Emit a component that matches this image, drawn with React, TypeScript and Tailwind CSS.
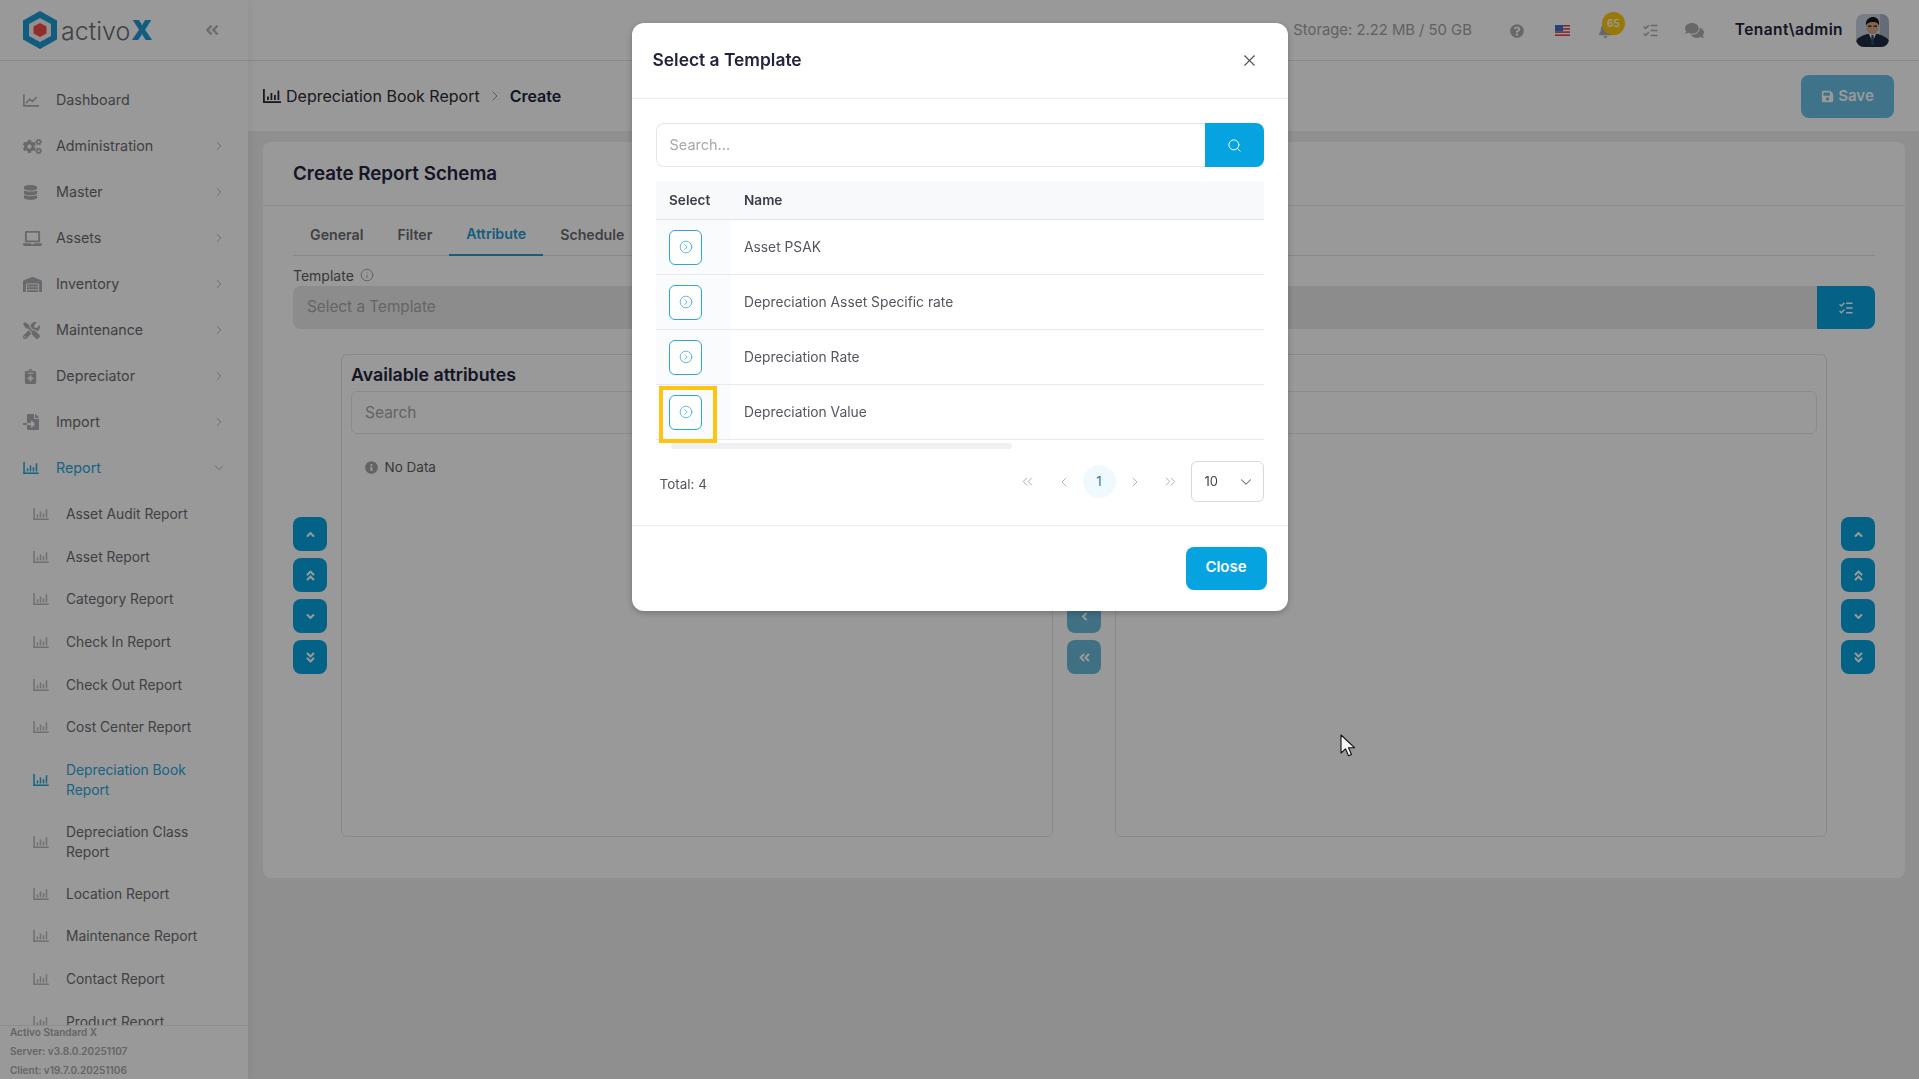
import React from "react";
import { ChevronRight, ChevronDown, ChevronLeft, ChevronsLeft, ChevronsRight, Info, Search, X, CircleChevronRight, ListChecks } from "lucide-react";
import { FaCogs, FaDatabase, FaLaptop, FaWarehouse, FaTools, FaNotesMedical, FaFileImport, FaQuestionCircle, FaBell, FaComments, FaSave, FaInfoCircle, FaAngleUp, FaAngleDoubleUp, FaAngleDown, FaAngleDoubleDown, FaAngleLeft, FaAngleDoubleLeft, FaAngleRight, FaAngleDoubleRight } from "react-icons/fa";

const BarIcon = ({ className = "" }: { className?: string }) => (
  <svg viewBox="0 0 18 14" className={className} fill="currentColor">
    <rect x="0" y="0" width="1.8" height="14" />
    <rect x="0" y="12.2" width="18" height="1.8" />
    <rect x="4" y="7.5" width="1.8" height="3.5" />
    <rect x="7.5" y="4" width="1.8" height="7" />
    <rect x="11" y="6" width="1.8" height="5" />
    <rect x="14.5" y="1.5" width="1.8" height="9.5" />
  </svg>
);

const LineIcon = ({ className = "" }: { className?: string }) => (
  <svg viewBox="0 0 18 14" className={className} fill="none" stroke="currentColor" strokeWidth="1.8">
    <path d="M1 0v13h17" />
    <path d="M3.5 10l4-4.5 3 2.5 5-5" />
  </svg>
);

const Logo = () => (
  <svg viewBox="0 0 34 38" className="w-[34px] h-[38px]">
    <polygon points="17,0 34,9.5 34,28.5 17,38 0,28.5 0,9.5" fill="#1f9ad6" />
    <polygon points="17,7 28,13 28,25 17,31 6,25 6,13" fill="#f2f2f2" />
    <polygon points="17,12 23.5,15.5 23.5,22.5 17,26 10.5,22.5 10.5,15.5" fill="#f04b4b" />
  </svg>
);

const Flag = () => (
  <svg viewBox="0 0 15 11" className="w-[15px] h-[11px]">
    <rect width="15" height="11" fill="#fff" />
    <rect y="0" width="15" height="1.6" fill="#e0434b" />
    <rect y="3.1" width="15" height="1.6" fill="#e0434b" />
    <rect y="6.3" width="15" height="1.6" fill="#e0434b" />
    <rect y="9.4" width="15" height="1.6" fill="#e0434b" />
    <rect width="8" height="6.3" fill="#3b6fd6" />
  </svg>
);

const Avatar = () => (
  <div className="w-[33px] h-[33px] rounded-lg overflow-hidden shrink-0">
    <svg viewBox="0 0 33 33" className="w-full h-full">
      <rect width="33" height="33" fill="#c9d2de" />
      <rect x="24" width="9" height="33" fill="#a9b4c6" />
      <path d="M0 33v-6c2-4 8-6 11-7h11c3 1 9 3 11 7v6z" fill="#1e2c44" />
      <path d="M13 20l3.5 8 3.5-8z" fill="#e8eef4" />
      <path d="M15.5 21h2l.6 10h-3.2z" fill="#27486e" />
      <ellipse cx="16.5" cy="13" rx="6" ry="7.5" fill="#d9a888" />
      <path d="M10 12c-1-7 4-9 7-9s7 2 6 9c-1-3-2-4-6-4s-6 1-7 4z" fill="#17140f" />
      <rect x="12" y="11.5" width="3.5" height="1.4" fill="#2a2a2a" />
      <rect x="17.5" y="11.5" width="3.5" height="1.4" fill="#2a2a2a" />
    </svg>
  </div>
);

const topItems: { label: string; icon: React.ReactNode; chev?: boolean }[] = [
  { label: "Dashboard", icon: <LineIcon className="w-[16px] h-[13px]" /> },
  { label: "Administration", icon: <FaCogs size={19} />, chev: true },
  { label: "Master", icon: <FaDatabase size={15} />, chev: true },
  { label: "Assets", icon: <FaLaptop size={19} />, chev: true },
  { label: "Inventory", icon: <FaWarehouse size={19} />, chev: true },
  { label: "Maintenance", icon: <FaTools size={17} />, chev: true },
  { label: "Depreciator", icon: <FaNotesMedical size={15} />, chev: true },
  { label: "Import", icon: <FaFileImport size={16} />, chev: true },
];

const subItems: { label: React.ReactNode; active?: boolean; tall?: boolean }[] = [
  { label: "Asset Audit Report" },
  { label: "Asset Report" },
  { label: "Category Report" },
  { label: "Check In Report" },
  { label: "Check Out Report" },
  { label: "Cost Center Report" },
  { label: "Depreciation Book Report", active: true, tall: true },
  { label: "Depreciation Class Report", tall: true },
  { label: "Location Report" },
  { label: "Maintenance Report" },
  { label: "Contact Report" },
  { label: "Product Report" },
];

const Sidebar = () => (
  <aside className="w-[248px] shrink-0 h-full bg-white flex flex-col relative shadow-[2px_0_10px_rgba(0,0,0,0.05)]">
    <div className="h-[61px] shrink-0 border-b border-[#e6e6e8] flex items-center pl-[23px] pr-[28px]">
      <Logo />
      <div className="ml-[4px] flex items-baseline leading-none">
        <span className="font-light text-[25px] text-[#6d6d72]">activo</span>
        <span className="font-black text-[#1f9ad6] text-[27px] ml-[1px]">X</span>
      </div>
      <FaAngleDoubleLeft className="ml-auto text-[#b8b8bc]" size={16} />
    </div>
    <nav className="flex-1 overflow-hidden pt-[16px] text-[13.8px] text-[#6c6c72]">
      {topItems.map((it) => (
        <div key={it.label} className="h-[46px] flex items-center pl-[23px] pr-[22px]">
          <span className="w-[33px] text-[#b0b0b6] flex items-center">{it.icon}</span>
          <span className="flex-1 text-[14.3px]">{it.label}</span>
          {it.chev && <ChevronRight size={14} strokeWidth={1.5} className="text-[#a8a8ac]" />}
        </div>
      ))}
      <div className="h-[46px] flex items-center pl-[23px] pr-[22px] text-[#2aa5da]">
        <span className="w-[33px] flex items-center"><BarIcon className="w-[16px] h-[12px]" /></span>
        <span className="flex-1 text-[14.3px]">Report</span>
        <ChevronDown size={14} strokeWidth={1.5} className="text-[#a8a8ac]" />
      </div>
      <div className="pt-[2px]">
        {subItems.map((s, i) => (
          <div key={i} className={`flex items-center pl-[33px] pr-[30px] leading-[20px] ${s.tall ? "h-[62px]" : "h-[42.6px]"} ${s.active ? "text-[#2aa5da]" : ""}`}>
            <span className={`w-[33px] shrink-0 ${s.active ? "" : "text-[#bcbcc0]"}`}><BarIcon className="w-[16px] h-[12px]" /></span>
            <span>{s.label}</span>
          </div>
        ))}
      </div>
    </nav>
    <div className="h-[54px] shrink-0 bg-white border-t border-[#ececee] pl-[10px] text-[10px] leading-[19px] font-semibold text-[#a8a8ac] whitespace-nowrap">
      <div className="-mt-[3px]">Activo Standard X</div>
      <div>Server: v3.8.0.20251107</div>
      <div>Client: v19.7.0.20251106</div>
    </div>
  </aside>
);

const Header = () => (
  <header className="h-[61px] shrink-0 bg-white border-b border-[#e6e6e8] flex items-center justify-end pr-[30px]">
    <span className="text-[14.8px] text-[#a2a2a6] mr-[38px]">Storage: 2.22 MB / 50 GB</span>
    <FaQuestionCircle size={14} className="text-[#adadb2] mr-[31px] mt-[2px]" />
    <span className="mr-[28px] flex"><Flag /></span>
    <span className="relative mr-[29px] flex">
      <FaBell size={15} className="text-[#adadb2]" />
      <span className="absolute left-[4px] -top-[11px] w-[23px] h-[23px] rounded-full bg-[#fdc80f] text-white text-[10px] font-semibold flex items-center justify-center">65</span>
    </span>
    <ListChecks size={17} className="text-[#adadb2] mr-[26px]" />
    <FaComments size={19} className="text-[#adadb2] mr-[31px]" />
    <span className="text-[15.5px] font-semibold text-[#23233c] mr-[13px] tracking-[0.4px]">Tenant\admin</span>
    <Avatar />
  </header>
);

const ArrowBtn = ({ children, faded }: { children: React.ReactNode; faded?: boolean }) => (
  <button className={`w-[34px] h-[34px] rounded-lg text-white flex items-center justify-center ${faded ? "bg-[#6cbbdb]" : "bg-[#05a4e0]"}`}>
    {children}
  </button>
);

const ArrowCol = () => (
  <div className="w-[34px] shrink-0 flex flex-col justify-center gap-[7px]">
    <ArrowBtn><FaAngleUp size={13} /></ArrowBtn>
    <ArrowBtn><FaAngleDoubleUp size={13} /></ArrowBtn>
    <ArrowBtn><FaAngleDown size={13} /></ArrowBtn>
    <ArrowBtn><FaAngleDoubleDown size={13} /></ArrowBtn>
  </div>
);

const AttrPanel = ({ title, empty }: { title: string; empty?: boolean }) => (
  <div className="flex-1 border border-[#e4e4e6] rounded-md px-[9px] pt-[10px]">
    <div className="text-[17.8px] font-semibold text-[#23233c] leading-[20px]">{title}</div>
    <div className="mt-[6px] h-[43px] border border-[#e8e8ea] rounded-md flex items-center px-[13px] text-[15.5px] text-[#a6a6aa]">Search</div>
    {empty && (
      <div className="mt-[23px] pl-[14px] flex items-center text-[13.5px] text-[#5d5d64]">
        <FaInfoCircle size={13} className="text-[#a5a5ac] mr-[6.5px]" />
        No Data
      </div>
    )}
  </div>
);

const Tab = ({ label, active }: { label: string; active?: boolean }) => (
  <div className={`h-[43px] px-[17px] flex items-center text-[14.2px] font-semibold ${active ? "text-[#1d9dd2] border-b-2 border-[#1d9dd2]" : "text-[#6c6c72]"}`}>{label}</div>
);

const Main = () => (
  <div className="flex-1 min-w-0 h-full flex flex-col bg-[#eeeeef]">
    <Header />
    <div className="h-[70px] shrink-0 bg-white flex items-center pl-[15px] pr-[25px]">
      <BarIcon className="w-[18px] h-[14px] text-[#2b2b33] mr-[5px]" />
      <span className="text-[16px] text-[#2b2b33]">Depreciation Book Report</span>
      <ChevronRight size={16} className="text-[#9a9a9e] mx-[7px]" strokeWidth={1.5} />
      <span className="text-[16px] font-semibold text-[#23233c]">Create</span>
      <button className="ml-auto w-[93px] h-[43px] rounded-lg bg-[#69c0e6] text-white text-[15px] font-semibold flex items-center justify-center gap-[4px]">
        <FaSave size={13} /> Save
      </button>
    </div>
    <div className="flex-1 min-h-0 pt-[11px] pl-[15px] pr-[14px]">
      <div className="w-full h-[736px] bg-white rounded-lg flex flex-col">
        <div className="h-[64px] shrink-0 border-b border-[#e8e8ea] flex items-center px-[30px] pt-[2px] text-[18.8px] font-semibold text-[#23233c]">Create Report Schema</div>
        <div className="px-[30px] flex-1 flex flex-col pb-[41px] min-h-0">
          <div className="h-[50px] shrink-0 pt-[7px] flex border-b border-[#e2e2e4]">
            <Tab label="General" />
            <Tab label="Filter" />
            <Tab label="Attribute" active />
            <Tab label="Schedule" />
          </div>
          <div className="mt-[9px] h-[20px] flex items-center text-[14px] text-[#5c5c62] gap-[6px]">
            Template <Info size={14} className="text-[#9c9ca0]" strokeWidth={1.5} />
          </div>
          <div className="mt-[1px] h-[43px] shrink-0 flex">
            <div className="flex-1 bg-[#e9e9eb] rounded-l-lg flex items-center px-[14px] text-[15.3px] text-[#a8a8ac]">Select a Template</div>
            <div className="w-[58px] bg-[#05a4e0] rounded-r-lg text-white flex items-center justify-center"><ListChecks size={16} strokeWidth={2.2} /></div>
          </div>
          <div className="mt-[25px] flex-1 min-h-0 flex gap-[14px]">
            <ArrowCol />
            <AttrPanel title="Available attributes" empty />
            <div className="w-[34px] shrink-0 flex flex-col justify-center gap-[7px]">
              <ArrowBtn faded><FaAngleRight size={13} /></ArrowBtn>
              <ArrowBtn faded><FaAngleDoubleRight size={13} /></ArrowBtn>
              <ArrowBtn faded><FaAngleLeft size={13} /></ArrowBtn>
              <ArrowBtn faded><FaAngleDoubleLeft size={13} /></ArrowBtn>
            </div>
            <AttrPanel title="Selected attributes" />
            <ArrowCol />
          </div>
        </div>
      </div>
    </div>
  </div>
);

const rows = ["Asset PSAK", "Depreciation Asset Specific rate", "Depreciation Rate", "Depreciation Value"];

const Modal = () => (
  <div className="fixed inset-0 bg-black/40 flex justify-center items-start pt-[23px]">
    <div className="w-[656px] h-[588px] bg-white rounded-xl shadow-[0_2px_6px_rgba(0,0,0,0.25)] flex flex-col">
      <div className="h-[76px] shrink-0 border-b border-[#eeeef0] flex items-center justify-between pl-[21px] pr-[29px]">
        <span className="text-[17.4px] font-semibold text-[#23233c]">Select a Template</span>
        <X size={19} className="text-[#50505a]" strokeWidth={1.4} />
      </div>
      <div className="h-[427px] shrink-0 border-b border-[#eeeef0] px-[24px] pt-[24px]">
        <div className="h-[44px] flex">
          <div className="flex-1 border border-[#e6e6e8] border-r-0 rounded-l-lg flex items-center px-[13px] pb-[1px] text-[14.5px] text-[#a8a8ac]">Search...</div>
          <div className="w-[59px] bg-[#05a4e0] rounded-r-lg flex items-center justify-center text-white"><Search size={15} strokeWidth={1.6} /></div>
        </div>
        <div className="mt-[14px]">
          <div className="h-[39px] bg-[#f8f9fb] border-b border-[#e3e3e6] flex items-center text-[13.6px] font-semibold text-[#3d3d4a]">
            <div className="w-[75px] pl-[13.5px]">Select</div>
            <div className="pl-[13.5px]">Name</div>
          </div>
          {rows.map((r, i) => (
            <div key={r} className="h-[55px] border-b border-[#e9e9ec] flex items-center text-[13.8px] text-[#55555e] relative">
              <div className="w-[75px] h-full bg-[#fafbfd] flex items-center pl-[13.5px]">
                <button className="w-[33px] h-[35px] border border-[#2fa6d8] rounded-md bg-white flex items-center justify-center text-[#2fa6d8]">
                  <CircleChevronRight size={14} strokeWidth={1.3} />
                </button>
              </div>
              <div className="pl-[13.5px]">{r}</div>
              {i === 3 && <div className="absolute left-[3px] top-[1px] w-[58px] h-[57px] border-4 border-[#fdc414]" />}
            </div>
          ))}
          <div className="mt-[3px] h-[6px] bg-white pl-[15px]">
            <div className="w-[341px] h-[6px] rounded-full bg-[#f0f0f2]" />
          </div>
        </div>
        <div className="mt-[12px] flex items-center">
          <span className="pl-[4px] text-[13.5px] text-[#55555e] mt-[5px]">Total: 4</span>
          <div className="ml-auto flex items-center text-[#a8a8ae]">
            <span className="w-[36px] flex justify-center"><ChevronsLeft size={17} strokeWidth={1.3} /></span>
            <span className="w-[36px] flex justify-center"><ChevronLeft size={16} strokeWidth={1.3} /></span>
            <span className="w-[33px] h-[33px] rounded-full bg-[#f0f9fd] text-[#1d7fa8] text-[13px] flex items-center justify-center mx-[1px]">1</span>
            <span className="w-[36px] flex justify-center"><ChevronRight size={16} strokeWidth={1.3} /></span>
            <span className="w-[36px] flex justify-center"><ChevronsRight size={17} strokeWidth={1.3} /></span>
            <div className="ml-[2px] w-[73px] h-[41px] border border-[#d9d9dc] rounded-md flex items-center justify-between pl-[13px] pr-[8px] text-[13px] text-[#44444c]">
              10 <ChevronDown size={18} strokeWidth={1.4} className="text-[#66666e]" />
            </div>
          </div>
        </div>
      </div>
      <div className="flex-1 flex justify-end pt-[21px] pr-[21px]">
        <button className="w-[81px] h-[43px] rounded-lg bg-[#05a4e0] text-white text-[15px] font-semibold pb-[2px]">Close</button>
      </div>
    </div>
  </div>
);

const Cursor = () => (
  <svg viewBox="0 0 16 24" className="absolute left-[1340px] top-[734px] w-[16px] h-[24px]">
    <path d="M1 1v18l4.5-4.2 3 7 3-1.3-3-6.8H14.5z" fill="#f5f5f5" stroke="#111" strokeWidth="1.1" strokeLinejoin="round" />
  </svg>
);

export default function App() {
  return (
    <div className="relative w-full h-screen flex overflow-hidden bg-white" style={{ fontFamily: "Inter, 'Noto Sans', sans-serif" }}>
      <Sidebar />
      <Main />
      <Modal />
      <Cursor />
    </div>
  );
}
